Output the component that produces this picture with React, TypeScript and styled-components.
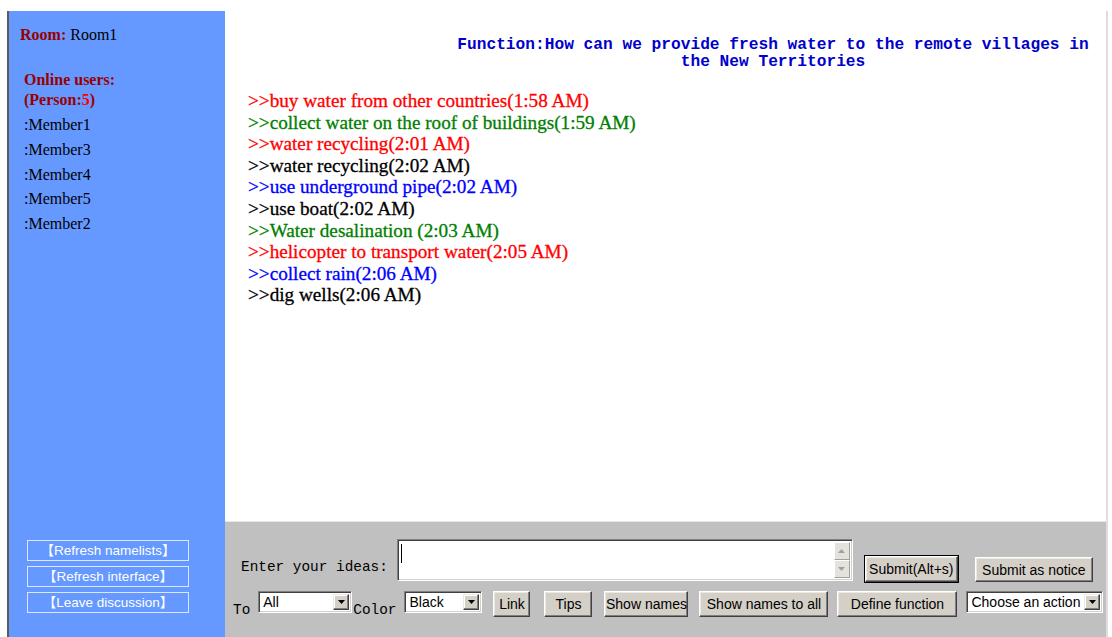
import React from "react";
import styled, { createGlobalStyle } from "styled-components";

const GlobalStyle = createGlobalStyle`
  html, body {
    margin: 0;
    padding: 0;
    background: #ffffff;
  }
  body {
    font-family: "Liberation Serif", "Times New Roman", serif;
    overflow: hidden;
  }
`;

const Frame = styled.div`
  display: flex;
  width: 1112px;
  height: 637px;
  padding: 11px 0 0 7px;
  box-sizing: border-box;
`;

/* ---------- left column ---------- */

const Sidebar = styled.aside`
  flex: none;
  width: 218px;
  background: #6699ff;
  border-left: 2px solid #5b5b5b;
  display: flex;
  flex-direction: column;
  padding: 14px 0 24px 11px;
  box-sizing: border-box;
  font-size: 16px;
`;

const RoomLine = styled.div`
  line-height: 20px;
  color: #000;
`;

const Label = styled.b`
  color: #990000;
`;

const Users = styled.div`
  margin: 25px 0 0 4px;
`;

const UsersTitle = styled.div`
  font-weight: bold;
  color: #990000;
  line-height: 20px;
`;

const Count = styled.span`
  color: #ff0000;
`;

const MemberList = styled.ul`
  list-style: none;
  margin: 3px 0 0;
  padding: 0;
`;

const Member = styled.li`
  line-height: 24.75px;
  color: #000;
`;

const SideActions = styled.div`
  margin-top: auto;
  margin-left: 7px;
  display: flex;
  flex-direction: column;
  gap: 5px;
`;

const SideButton = styled.button`
  width: 162px;
  height: 21px;
  padding: 0;
  background: transparent;
  border: 1px solid #dde8ff;
  color: #ffffff;
  font-family: "Liberation Sans", "Noto Sans CJK SC", sans-serif;
  font-size: 13.5px;
  line-height: 19px;
  text-align: center;
  white-space: nowrap;
  cursor: pointer;
`;

/* ---------- main column ---------- */

const Main = styled.main`
  flex: none;
  width: 881px;
  display: flex;
  flex-direction: column;
  border-right: 2px solid #dedede;
`;

const Board = styled.section`
  flex: none;
  height: 510px;
  background: #fff;
  padding: 0 0 0 23px;
  box-sizing: border-box;
`;

const Topic = styled.h1`
  margin: 25.5px 0 0 195px;
  width: 660px;
  text-align: center;
  font-family: "Liberation Mono", "Courier New", monospace;
  font-weight: bold;
  font-size: 16.2px;
  line-height: 17px;
  color: #0000cc;
`;

const Messages = styled.div`
  margin-top: 19.5px;
`;

const Message = styled.div<{ $color: string }>`
  color: ${(p) => p.$color};
  font-size: 19.2px;
  line-height: 21.6px;
  white-space: nowrap;
  -webkit-text-stroke: 0.3px currentColor;
`;

/* ---------- input panel ---------- */

const Panel = styled.footer`
  flex: 1;
  background: #c0c0c0;
  border-top: 1px solid #e6e6e6;
  padding-top: 17px;
  display: flex;
  flex-direction: column;
  gap: 9px;
`;

const Row = styled.div<{ $indent: number; $align: string }>`
  display: flex;
  align-items: ${(p) => p.$align};
  padding-left: ${(p) => p.$indent}px;
`;

const MonoText = styled.span<{ $ml?: number; $mb?: number; $mt?: number }>`
  font-family: "Liberation Mono", "Courier New", monospace;
  font-size: 14.4px;
  line-height: 17px;
  color: #000;
  margin-left: ${(p) => p.$ml ?? 0}px;
  margin-bottom: ${(p) => p.$mb ?? 0}px;
  margin-top: ${(p) => p.$mt ?? 0}px;
  white-space: pre;
`;

const IdeaField = styled.div`
  position: relative;
  display: flex;
  width: 456px;
  height: 42px;
  margin-left: 9px;
  margin-bottom: 1px;
  box-sizing: border-box;
  background: #fff;
  border: 1px solid;
  border-color: #808080 #ffffff #ffffff #808080;
  box-shadow: inset 1px 1px 0 #404040, inset -1px -1px 0 #d4d0c8;

  &::before {
    content: "";
    position: absolute;
    left: 3px;
    top: 4px;
    width: 1px;
    height: 19px;
    background: #000;
  }
`;

const IdeaInput = styled.textarea`
  flex: 1;
  border: 0;
  margin: 2px 0 2px 2px;
  padding: 1px 2px;
  resize: none;
  outline: none;
  font-family: "Liberation Sans", sans-serif;
  font-size: 13px;
  background: transparent;
  overflow: hidden;
`;

const ScrollBar = styled.div`
  display: flex;
  flex-direction: column;
  width: 16px;
  margin: 2px 2px 2px 0;
`;

const ScrollArrow = styled.span`
  flex: 1;
  display: flex;
  align-items: center;
  justify-content: center;
  background: #e4e2dc;
  border: 1px solid;
  border-color: #ffffff #a0a0a0 #a0a0a0 #ffffff;
`;

const ClassicButton = styled.button<{ $w: number; $h?: number; $ml?: number; $primary?: boolean }>`
  flex: none;
  width: ${(p) => p.$w}px;
  height: ${(p) => p.$h ?? 26}px;
  margin-left: ${(p) => p.$ml ?? 0}px;
  padding: 0;
  background: #d4d0c8;
  color: #000;
  font-family: "Liberation Sans", Tahoma, sans-serif;
  font-size: 14px;
  white-space: nowrap;
  border: 1px solid;
  border-color: #ffffff #404040 #404040 #ffffff;
  box-shadow: inset -1px -1px 0 #808080, inset 1px 1px 0 #ece9e2;
  outline: ${(p) => (p.$primary ? "1px solid #000" : "none")};
  cursor: pointer;
`;

const Combo = styled.div<{ $w: number; $ml?: number }>`
  flex: none;
  display: flex;
  align-items: stretch;
  width: ${(p) => p.$w}px;
  height: 22px;
  margin-left: ${(p) => p.$ml ?? 0}px;
  box-sizing: border-box;
  background: #fff;
  border: 1px solid;
  border-color: #808080 #ffffff #ffffff #808080;
  box-shadow: inset 1px 1px 0 #404040, inset -1px -1px 0 #d4d0c8;
  padding: 2px;
`;

const ComboValue = styled.span`
  flex: 1;
  font-family: "Liberation Sans", Tahoma, sans-serif;
  font-size: 14px;
  line-height: 16px;
  padding-left: 2px;
  color: #000;
  white-space: nowrap;
  overflow: hidden;
`;

const ComboArrow = styled.span`
  flex: none;
  width: 16px;
  display: flex;
  align-items: center;
  justify-content: center;
  box-sizing: border-box;
  background: #d4d0c8;
  border: 1px solid;
  border-color: #ece9e2 #404040 #404040 #ece9e2;
  box-shadow: inset -1px -1px 0 #808080, inset 1px 1px 0 #ffffff;
`;

const Triangle = ({ up, color }: { up?: boolean; color: string }) => (
  <svg width="7" height="4" viewBox="0 0 7 4" style={{ display: "block" }}>
    <path d={up ? "M0 4 L3.5 0 L7 4 Z" : "M0 0 L7 0 L3.5 4 Z"} fill={color} />
  </svg>
);

const Dropdown = ({ value, w, ml }: { value: string; w: number; ml?: number }) => (
  <Combo $w={w} $ml={ml}>
    <ComboValue>{value}</ComboValue>
    <ComboArrow>
      <Triangle color="#000" />
    </ComboArrow>
  </Combo>
);

const members = ["Member1", "Member3", "Member4", "Member5", "Member2"];

const ideas: { text: string; color: string }[] = [
  { text: "buy water from other countries(1:58 AM)", color: "#ff0000" },
  { text: "collect water on the roof of buildings(1:59 AM)", color: "#008000" },
  { text: "water recycling(2:01 AM)", color: "#ff0000" },
  { text: "water recycling(2:02 AM)", color: "#000000" },
  { text: "use underground pipe(2:02 AM)", color: "#0000ff" },
  { text: "use boat(2:02 AM)", color: "#000000" },
  { text: "Water desalination (2:03 AM)", color: "#008000" },
  { text: "helicopter to transport water(2:05 AM)", color: "#ff0000" },
  { text: "collect rain(2:06 AM)", color: "#0000ff" },
  { text: "dig wells(2:06 AM)", color: "#000000" },
];

export default function App() {
  return (
    <>
      <GlobalStyle />
      <Frame>
        <Sidebar>
          <RoomLine>
            <Label>Room:</Label> Room1
          </RoomLine>
          <Users>
            <UsersTitle>Online users:</UsersTitle>
            <UsersTitle>
              (Person:<Count>5</Count>)
            </UsersTitle>
            <MemberList>
              {members.map((m) => (
                <Member key={m}>:{m}</Member>
              ))}
            </MemberList>
          </Users>
          <SideActions>
            <SideButton>【Refresh namelists】</SideButton>
            <SideButton>【Refresh interface】</SideButton>
            <SideButton>【Leave discussion】</SideButton>
          </SideActions>
        </Sidebar>

        <Main>
          <Board>
            <Topic>Function:How can we provide fresh water to the remote villages in the New Territories</Topic>
            <Messages>
              {ideas.map((idea, i) => (
                <Message key={i} $color={idea.color}>
                  &gt;&gt;{idea.text}
                </Message>
              ))}
            </Messages>
          </Board>

          <Panel>
            <Row $indent={16} $align="flex-end">
              <MonoText $mb={6}>Enter your ideas:</MonoText>
              <IdeaField>
                <IdeaInput aria-label="Enter your ideas" />
                <ScrollBar>
                  <ScrollArrow>
                    <Triangle up color="#a0a0a0" />
                  </ScrollArrow>
                  <ScrollArrow>
                    <Triangle color="#a0a0a0" />
                  </ScrollArrow>
                </ScrollBar>
              </IdeaField>
              <ClassicButton $w={93} $ml={12} $primary>
                Submit(Alt+s)
              </ClassicButton>
              <ClassicButton $w={118} $h={25} $ml={17}>
                Submit as notice
              </ClassicButton>
            </Row>
            <Row $indent={8} $align="flex-start">
              <MonoText $mt={11}>To</MonoText>
              <Dropdown value="All" w={94} ml={8} />
              <MonoText $mt={11} $ml={1}>Color</MonoText>
              <Dropdown value="Black" w={78} ml={8} />
              <ClassicButton $w={37} $ml={11}>
                Link
              </ClassicButton>
              <ClassicButton $w={48} $ml={14}>
                Tips
              </ClassicButton>
              <ClassicButton $w={84} $ml={12}>
                Show names
              </ClassicButton>
              <ClassicButton $w={129} $ml={11}>
                Show names to all
              </ClassicButton>
              <ClassicButton $w={120} $ml={9}>
                Define function
              </ClassicButton>
              <Dropdown value="Choose an action" w={137} ml={9} />
            </Row>
          </Panel>
        </Main>
      </Frame>
    </>
  );
}
